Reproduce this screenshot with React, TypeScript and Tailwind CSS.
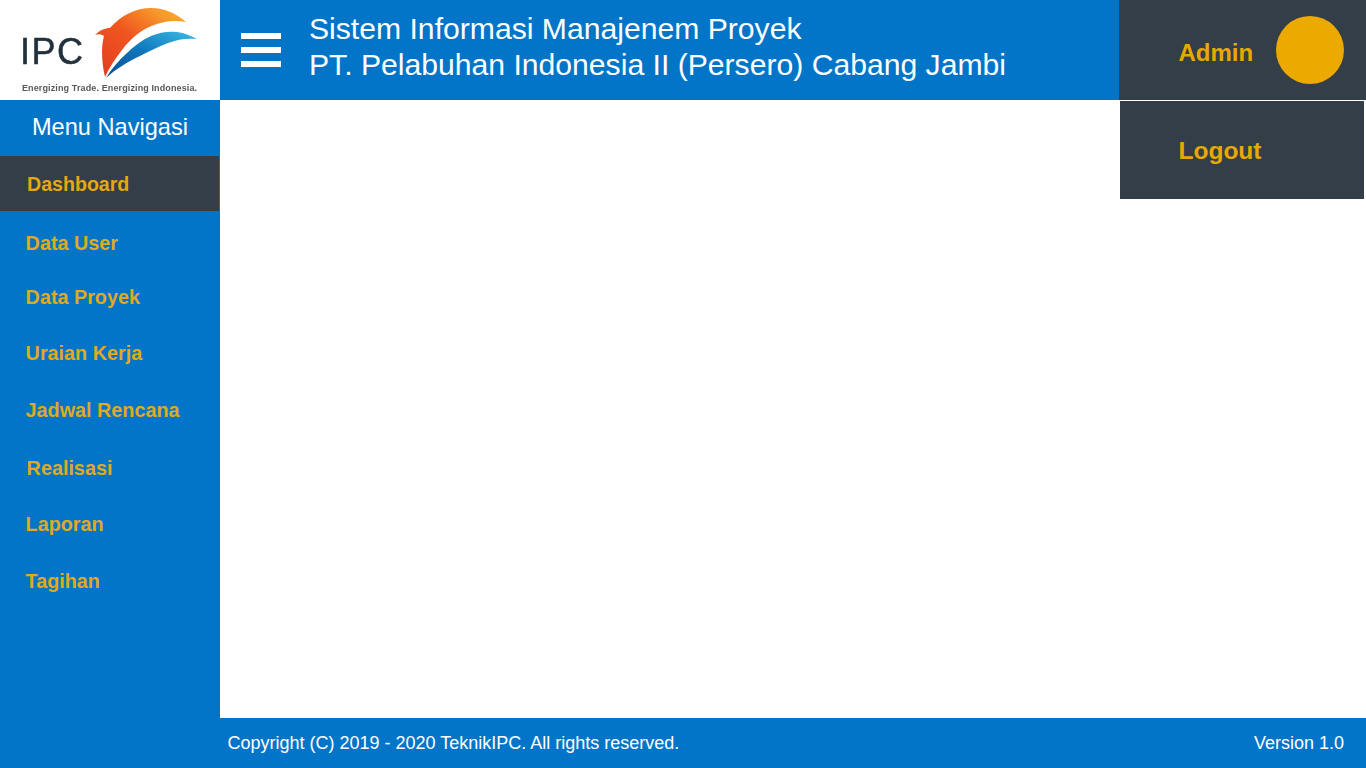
import React from "react";

const menuItems = [
  { label: "Data User", cls: "mt-[21px] ml-[25.6px]" },
  { label: "Data Proyek", cls: "mt-[31px] ml-[25.6px]" },
  { label: "Uraian Kerja", cls: "mt-[33px] ml-[25.6px]" },
  { label: "Jadwal Rencana", cls: "mt-[34px] ml-[25.6px]" },
  { label: "Realisasi", cls: "mt-[35px] ml-[26.6px]" },
  { label: "Laporan", cls: "mt-[33px] ml-[25.6px]" },
  { label: "Tagihan", cls: "mt-[34px] ml-[25.6px]" },
];

const Logo = () => (
  <div className="relative w-[220px] h-[100px] bg-white shrink-0 overflow-hidden">
    <svg width="220" height="100" viewBox="0 0 220 100" className="absolute left-0 top-0 blur-[0.3px]">
      <defs>
        <linearGradient id="wing" x1="0" y1="1" x2="1" y2="0">
          <stop offset="0" stopColor="#e23a22" />
          <stop offset="0.5" stopColor="#f0561f" />
          <stop offset="0.8" stopColor="#f7962a" />
          <stop offset="1" stopColor="#f9b52c" />
        </linearGradient>
        <linearGradient id="wave" x1="0" y1="1" x2="1" y2="0">
          <stop offset="0" stopColor="#0b4a94" />
          <stop offset="0.5" stopColor="#0f78bd" />
          <stop offset="1" stopColor="#3cbce6" />
        </linearGradient>
      </defs>
      <path
        d="M95 35 C100 30 105 28 110 28 C121 15 136 8 151 8 C165 8 177 14 186 22 C175 20 166 21 157 24 C143 28 131 38 122 50 C115 59 109 68 105 77 C103 69 102 60 102 51 C102 45 103 40 104 36 C101 34 98 34 95 35 Z"
        fill="url(#wing)"
      />
      <path
        d="M106 78 C112 68 119 60 127 53 C134 46 142 40 151 36 C160 32 169 31 177 32 C185 33 191 36 197 39 C187 38 178 39 168 43 C158 47 149 51 140 56 C127 62 116 69 106 78 Z"
        fill="url(#wave)"
      />
    </svg>
    <span className="absolute left-[20px] top-[30px] text-[36px] leading-[44px] tracking-[1.5px] text-[#22303c] font-['Liberation_Sans',sans-serif] [-webkit-text-stroke:0.5px_#22303c] blur-[0.3px]">
      IPC
    </span>
    <span className="absolute left-[22px] top-[83px] text-[9px] leading-[11px] font-bold text-[#55595c] whitespace-nowrap font-['Liberation_Sans',sans-serif] tracking-[0.12px] blur-[0.3px]">
      Energizing Trade. Energizing Indonesia.
    </span>
  </div>
);

export default function App() {
  return (
    <div className="relative flex flex-col w-[1366px] h-[768px] overflow-hidden bg-white font-['Liberation_Sans',Arial,sans-serif]">
      {/* header */}
      <header className="flex h-[100px] bg-[#0275c9] shrink-0">
        <Logo />
        <div className="flex items-center flex-1">
          <div className="flex flex-col gap-[8px] w-[40px] ml-[21px]">
            <div className="h-[6px] bg-white" />
            <div className="h-[6px] bg-white" />
            <div className="h-[6px] bg-white" />
          </div>
          <div className="ml-[28px] mt-[-6px] text-[30.15px] leading-[36px] text-white whitespace-nowrap">
            <div>Sistem Informasi Manajenem Proyek</div>
            <div>PT. Pelabuhan Indonesia II (Persero) Cabang Jambi</div>
          </div>
        </div>
        <div className="flex items-center w-[247px] bg-[#343e48] shrink-0">
          <span className="ml-[59.5px] mt-[6px] text-[24px] font-bold text-[#e9a800]">Admin</span>
          <div className="ml-[23px] w-[68px] h-[68px] rounded-full bg-[#eca900]" />
        </div>
      </header>

      {/* dropdown */}
      <div className="absolute left-[1120px] top-[101px] flex items-center w-[244px] h-[98px] bg-[#343e48]">
        <span className="ml-[58.5px] mt-[3px] text-[24.5px] font-bold text-[#e9a800]">Logout</span>
      </div>

      <div className="flex flex-1">
        {/* sidebar */}
        <aside className="flex flex-col w-[220px] bg-[#0275c9] shrink-0">
          <div className="flex items-center justify-center h-[56px] text-[23.6px] text-white">Menu Navigasi</div>
          <div className="flex items-center h-[55px] w-[219px] bg-[#343e48] pl-[27px] pt-[2px] text-[19.6px] font-bold text-[#e6a80f]">
            Dashboard
          </div>
          {menuItems.map((item) => (
            <div key={item.label} className={`${item.cls} text-[19.8px] leading-[23px] font-bold text-[#dfaa22]`}>
              {item.label}
            </div>
          ))}
        </aside>

        <main className="flex-1 bg-white" />
      </div>

      {/* footer */}
      <footer className="absolute left-[220px] right-0 bottom-0 flex items-center justify-between h-[50px] bg-[#0275c9] pl-[7.5px] pr-[22px] text-[18px] text-white">
        <span>Copyright (C) 2019 - 2020 TeknikIPC. All rights reserved.</span>
        <span>Version 1.0</span>
      </footer>
    </div>
  );
}
